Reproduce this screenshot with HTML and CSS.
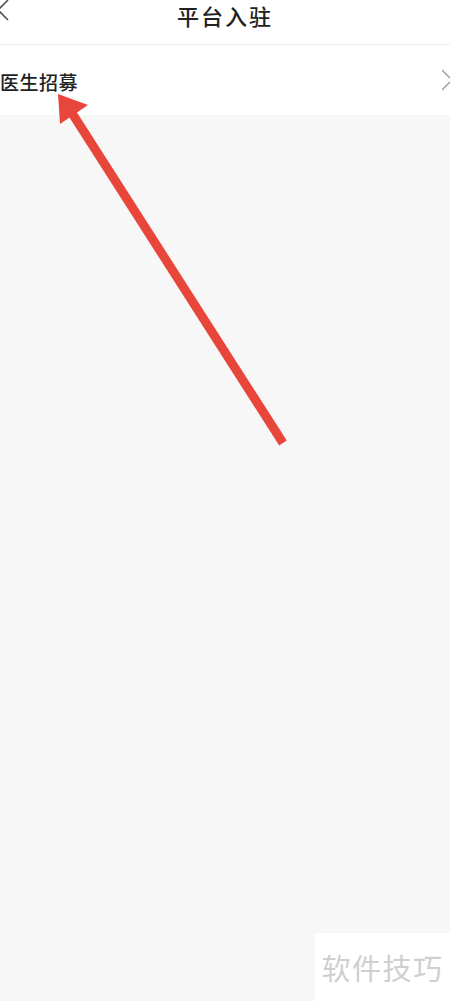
FILE: index.html
```html
<!DOCTYPE html>
<html lang="zh">
<head>
<meta charset="utf-8">
<title>平台入驻</title>
<link rel="stylesheet" href="styles.css">
</head>
<body>
<div class="page">
  <header class="topbar">
    <svg class="back" width="12" height="24" viewBox="0 0 12 24"><path d="M8 0 L-2 10 L8 20" fill="none" stroke="#555" stroke-width="1.6"/></svg>
    <h1 class="title">平台入驻</h1>
  </header>
  <div class="row">
    <span class="row-label">医生招募</span>
    <svg class="chev" width="8" height="32" viewBox="0 0 8 32"><path d="M0 6 L10 16 L0 26" fill="none" stroke="#999" stroke-width="1.4"/></svg>
  </div>
  <main class="content"></main>
  <svg class="arrow" width="450" height="460" viewBox="0 0 450 460">
    <line x1="283" y1="443" x2="70" y2="110" stroke="#e8463b" stroke-width="9" stroke-linecap="butt"/>
    <polygon points="58,94 60,124 88,105" fill="#e8463b"/>
  </svg>
  <div class="watermark">软件技巧</div>
</div>
</body>
</html>
```
FILE: styles.css
```css
html, body {
  margin: 0;
  padding: 0;
}
body {
  background: #f7f7f8;
  font-family: "Noto Sans CJK SC", "Noto Sans", sans-serif;
  color: #222;
}
.page {
  position: relative;
  width: 450px;
  height: 1001px;
  overflow: hidden;
  display: flex;
  flex-direction: column;
}
.topbar {
  height: 45px;
  box-sizing: border-box;
  padding-top: 1px;
  background: #fff;
  border-bottom: 1px solid #ececec;
  display: flex;
  align-items: flex-start;
  justify-content: center;
  position: relative;
  flex: none;
}
.back {
  position: absolute;
  left: 0;
  top: 0;
}
.title {
  margin: 0;
  font-size: 22px;
  font-weight: 500;
  letter-spacing: 2px;
  color: #222;
  line-height: 28px;
}
.row {
  height: 70px;
  background: #fff;
  display: flex;
  align-items: center;
  justify-content: space-between;
  flex: none;
}
.row-label {
  font-size: 19px;
  font-weight: 500;
  letter-spacing: 0.5px;
  color: #222;
  margin-top: 2px;
}
.chev {
  margin-right: 0;
  margin-top: 0;
}
.content {
  flex: 1;
  background: #f7f7f8;
}
.arrow {
  position: absolute;
  left: 0;
  top: 0;
}
.watermark {
  position: absolute;
  right: 0;
  bottom: 0;
  width: 135px;
  height: 68px;
  background: #fff;
  color: #cfcfcf;
  font-size: 29px;
  display: flex;
  align-items: center;
  justify-content: center;
  letter-spacing: 1.5px;
}
```
